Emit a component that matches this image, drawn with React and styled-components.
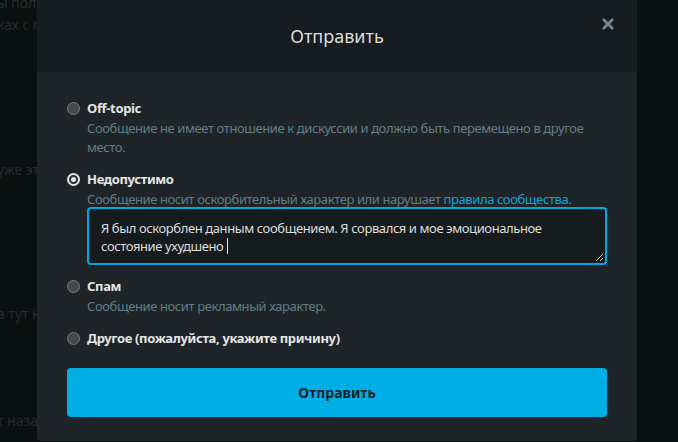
import styled, { createGlobalStyle } from "styled-components";

const GlobalStyle = createGlobalStyle`
    html, body {
        margin: 0;
        padding: 0;
        background: #0a0f10;
        overflow: hidden;
    }
    * {
        box-sizing: border-box;
    }
`;

const reasons = [
    {
        id: "offtopic",
        title: "Off-topic",
        text: "Сообщение не имеет отношение к дискуссии и должно быть перемещено в другое место.",
    },
    {
        id: "bad",
        title: "Недопустимо",
        text: "Сообщение носит оскорбительный характер или нарушает ",
        link: "правила сообщества",
        withReason: true,
    },
    {
        id: "spam",
        title: "Спам",
        text: "Сообщение носит рекламный характер.",
    },
    {
        id: "other",
        title: "Другое (пожалуйста, укажите причину)",
    },
];

// faint lines of the page behind the dialog
const feed = [
    { text: "ы получили ответ на вопрос", top: -7 },
    { text: "ках с галереи", top: 3 },
    { text: "уже этот вопрос", top: 126 },
    { text: "а тут кто-то", top: 125 },
    { text: "т назад", top: 88 },
];

const message = "Я был оскорблен данным сообщением. Я сорвался и мое эмоциональное состояние ухудшено ";

const App = () => {
    return (
        <Page>
            <GlobalStyle />
            <Feed>
                {feed.map((line, i) => (
                    <FeedLine key={i} $top={line.top}>{line.text}</FeedLine>
                ))}
            </Feed>

            <Modal>
                <Header>
                    <Title>Отправить</Title>
                    <Close aria-label="Закрыть">
                        <svg width="12" height="12" viewBox="0 0 12 12">
                            <path d="M2 2 L10 10 M10 2 L2 10" stroke="currentColor" strokeWidth="2.8" strokeLinecap="square" />
                        </svg>
                    </Close>
                </Header>
                <Body>
                    {reasons.map((r) => (
                        <Option key={r.id}>
                            <Radio type="radio" name="reason" defaultChecked={r.id === "bad"} />
                            <Content>
                                <Label>{r.title}</Label>
                                {r.text && (
                                    <Desc>
                                        {r.text}
                                        {r.link && <><Rules href="#">{r.link}</Rules>.</>}
                                    </Desc>
                                )}
                                {r.withReason && (
                                    <Reason role="textbox" aria-multiline="true">
                                        {message}
                                        <Caret />
                                        <Grip width="9" height="9" viewBox="0 0 9 9">
                                            <path d="M1 8 L8 1 M5 8 L8 5" stroke="#c9c9c9" strokeWidth="1" />
                                        </Grip>
                                    </Reason>
                                )}
                            </Content>
                        </Option>
                    ))}
                    <Submit>Отправить</Submit>
                </Body>
            </Modal>
        </Page>
    );
};

const Page = styled.div`
    position: relative;
    width: 678px;
    height: 442px;
    overflow: hidden;
    background: #0a0f10;
    font-family: "Noto Sans", "Open Sans", sans-serif;
`;

const Feed = styled.div`
    display: flex;
    flex-direction: column;
    margin-left: -3px;
`;

const FeedLine = styled.div`
    margin-top: ${(p) => p.$top}px;
    font-size: 14px;
    line-height: 19px;
    color: #252c2f;
    white-space: nowrap;
`;

const Modal = styled.div`
    position: absolute;
    top: 0;
    left: 37px;
    width: 600px;
    height: 441px;
    border-radius: 0 0 4px 4px;
    overflow: hidden;
    background: #1e2427;
`;

const Header = styled.div`
    position: relative;
    height: 72px;
    display: flex;
    align-items: center;
    justify-content: center;
    background: #161c1f;
`;

const Title = styled.h2`
    margin: 0;
    font-size: 18px;
    font-weight: 400;
    color: #dcdcdc;
`;

const Close = styled.button`
    position: absolute;
    top: 17px;
    right: 22px;
    padding: 0;
    width: 14px;
    height: 14px;
    display: flex;
    align-items: center;
    justify-content: center;
    border: none;
    background: none;
    color: #6c8b97;
    cursor: pointer;
`;

const Body = styled.div`
    padding: 27px 30px 24px;
    display: flex;
    flex-direction: column;
`;

const Option = styled.label`
    display: flex;
    align-items: flex-start;
    gap: 7px;
    margin-bottom: 13px;
    cursor: pointer;
`;

const Radio = styled.input`
    appearance: none;
    flex: none;
    width: 13px;
    height: 13px;
    margin: 3px 0 0;
    border-radius: 50%;
    border: 1px solid #7a7a7a;
    background: #484848;
    display: grid;
    place-content: center;
    cursor: pointer;

    &:checked {
        border: 2px solid #e6e6e6;
        background: #2b2b2b;
    }
    &:checked::before {
        content: "";
        width: 5px;
        height: 5px;
        border-radius: 50%;
        background: #e6e6e6;
    }
`;

const Content = styled.div`
    flex: 1;
    display: flex;
    flex-direction: column;
`;

const Label = styled.span`
    font-size: 13px;
    line-height: 19px;
    font-weight: 700;
    letter-spacing: -0.35px;
    color: #e4e4e4;
`;

const Desc = styled.p`
    margin: 1px 0 0;
    font-size: 13px;
    line-height: 19px;
    letter-spacing: -0.4px;
    color: #617d88;
`;

const Rules = styled.a`
    color: #0ea5d8;
    text-decoration: none;
`;

const Reason = styled.div`
    position: relative;
    margin: -2px 0 -1px;
    width: 100%;
    height: 58px;
    padding: 10px 12px;
    border: 2px solid #00a9e0;
    border-radius: 4px;
    background: #161b1e;
    color: #dedede;
    font-size: 13px;
    line-height: 18px;
    letter-spacing: -0.4px;
    cursor: text;
`;

const Caret = styled.span`
    display: inline-block;
    width: 1px;
    height: 16px;
    margin-left: 1px;
    vertical-align: -3px;
    background: #e0e0e0;
`;

const Grip = styled.svg`
    position: absolute;
    right: 1px;
    bottom: 1px;
`;

const Submit = styled.button`
    margin-top: 7px;
    height: 49px;
    border: none;
    border-radius: 4px;
    background: #00aee6;
    color: #1a2226;
    font-family: "Noto Sans", "Open Sans", sans-serif;
    font-size: 14px;
    font-weight: 700;
    cursor: pointer;
`;

export default App;
